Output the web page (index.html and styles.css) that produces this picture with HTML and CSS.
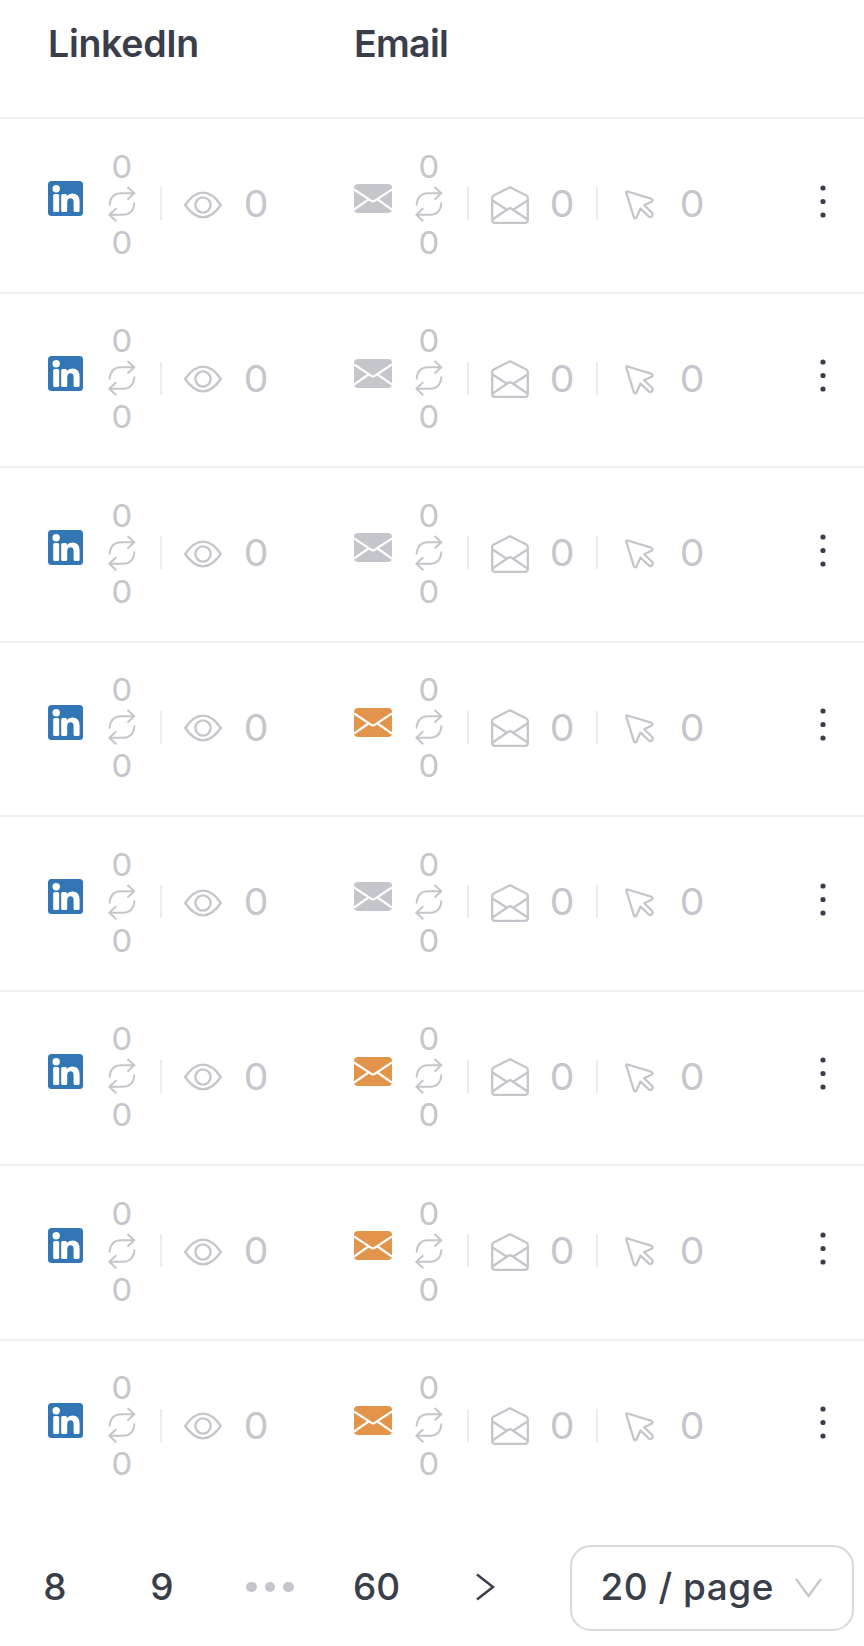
FILE: index.html
```html
<!DOCTYPE html>
<html lang="en">
<head>
<meta charset="utf-8">
<title>Campaign stats</title>
<link rel="stylesheet" href="styles.css">
</head>
<body>
<svg class="sprite" aria-hidden="true">
  <symbol id="linkedin" viewBox="0 0 35 35">
    <rect width="35" height="35" rx="3.5" fill="#3276b5"/>
    <g fill="#fff"><circle cx="8.200" cy="7.800" r="3.700"/><rect x="5.200" y="12.900" width="6" height="18" rx="1.500"/>
    <path d="M13.200 14.400q0-1.500 1.500-1.500h2.700q1.400 0 1.400 1.400v.6q2-2.500 5.400-2.500 7.400 0 7.400 8.200v8.800q0 1.500-1.500 1.500h-3q-1.500 0-1.500-1.500v-8.200q0-4-3-4-3.400 0-3.400 4.300v7.900q0 1.500-1.500 1.500h-3q-1.500 0-1.500-1.500z"/></g>
  </symbol>
  <symbol id="sync" viewBox="0 0 28 36">
    <path d="M1.700 19.500V18Q3 7.200 13 7.200H26.300M19.500 1 26.300 7.200 19.500 13.400M26.300 16.500V18Q25 28.800 15 28.800H1.500M8.300 22.300 1.300 28.800 8.300 35.300"/>
  </symbol>
  <symbol id="eye" viewBox="0 0 38 28">
    <path d="M1.200 14C6 7 12 1.700 19 1.700S32 7 36.800 14C32 21 26 26.300 19 26.300S6 21 1.200 14Z"/><circle cx="19" cy="14" r="7.600"/>
  </symbol>
  <symbol id="mail" viewBox="0 0 38 29">
    <rect width="38" height="29" rx="4" fill="currentColor"/>
    <path d="M0 5.500 17 16.600Q19 18.200 21 16.600L38 5.500M0 25.500 14.500 15.500M38 25.500 23.500 15.500" stroke="#fff" stroke-width="2.200"/>
  </symbol>
  <symbol id="open" viewBox="0 0 38 38">
    <path d="M1.200 12Q1.200 10.300 2.700 9.500L19 1.200 35.300 9.500Q36.800 10.300 36.800 12V34Q36.800 36.800 34 36.800H4Q1.200 36.800 1.200 34ZM1.500 14.500 16.300 24M36.500 14.500 21.700 24M1.500 33.500 17 23Q19 21.500 21 23L36.500 33.500"/>
  </symbol>
  <symbol id="cursor" viewBox="0 0 29 30">
    <path d="M2.500 1.500 26 8.700Q29 10 26.500 11.700L19.200 15.200 27 22.800Q28.300 24.300 27.100 26 25.700 27.900 24 26.600L15.500 18.500 11.500 27.500Q10 29.500 8.800 27L1.300 2.700Q1 1.200 2.500 1.500Z"/>
  </symbol>
  <symbol id="more" viewBox="0 0 6 33">
    <g fill="#393e4a"><circle cx="3" cy="3" r="2.600"/><circle cx="3" cy="16.500" r="2.600"/><circle cx="3" cy="30" r="2.600"/></g>
  </symbol>
</svg>
<div class="head"><div class="head-li">LinkedIn</div><div class="head-em">Email</div></div>
<div id="rows"></div>
<div class="pager">
  <span class="page p8">8</span><span class="page p9">9</span>
  <span class="ellipsis"><i></i><i></i><i></i></span>
  <span class="page p60">60</span>
  <svg class="next" viewBox="0 0 19 28"><path d="M1 1.500 17 14 1 26.500"/></svg>
  <div class="select"><span class="size">20 / page</span><svg class="caret" viewBox="0 0 27 20"><path d="M1 1 13.500 18 26 1"/></svg></div>
</div>
<script src="rows.js"></script>
</body>
</html>
```
FILE: styles.css
```css
body { margin: 0; background: #fff; font-family: Inter, "Liberation Sans", sans-serif; color: #393e4a; overflow: hidden; }
.sprite { position: absolute; width: 0; height: 0; }
svg { display: block; flex: none; fill: none; }
.head { display: flex; box-sizing: border-box; height: 119px; border-bottom: 2px solid #f0f0f0; padding-left: 48px; font-size: 37.5px; line-height: 88px; font-weight: 600; }
.head-li { width: 306px; letter-spacing: -0.3px; }
.head-em { letter-spacing: -0.7px; }
.row { display: flex; align-items: center; box-sizing: border-box; height: 174.5px; padding: 0 0 3px 48px; border-bottom: 2px solid #f0f0f0; color: #c5c6cb; stroke: #c5c6cb; stroke-width: 2.3; stroke-linejoin: round; }
.row:last-child { border-bottom-color: transparent; }
.row span { stroke: none; }
.cell { display: flex; align-items: center; }
.cell-li { width: 306px; }
.cell-em { width: 466px; }
.linkedin { width: 35px; height: 35px; margin: 0 25px 10px 0; stroke: none; }
.mail { width: 38px; height: 29px; margin: 0 23px 10px 0; stroke: none; color: #c5c6cb; }
.mail.on { color: #e2954a; }
.stack { display: flex; flex-direction: column; align-items: center; width: 28px; }
.stack span { font-size: 31px; line-height: 40px; padding-top: 1px; margin-bottom: -1px; }
.sync { width: 28px; height: 36px; stroke-width: 2; }
.bar { width: 2px; height: 33px; background: #ececec; margin-left: 24px; }
.eye { width: 38px; height: 28px; margin: 2px 21px 0 22px; }
.open { width: 38px; height: 38px; margin: 2px 20px 0 22px; }
.cursor { width: 29px; height: 30px; margin: 3px 25px 0 27px; }
.num { width: 26px; text-align: center; font-size: 37px; line-height: 40px; padding-top: 1px; }
.bar.second { margin-left: 21px; }
.more { width: 6px; height: 33px; margin-bottom: 5px; stroke: none; }
.stack span, .num { transform: scaleX(1.06); }
.pager { display: flex; align-items: center; height: 86px; margin-top: 30px; font-size: 37px; line-height: 44px; font-weight: 450; }
.page, .size { padding-bottom: 2px; }
.page { text-align: center; }
.p8 { width: 28px; margin-left: 41px; }
.p9 { width: 28px; margin-left: 79px; }
.p60 { width: 50px; margin-left: 58px; }
.ellipsis { display: flex; gap: 8px; margin: 0 0 2px 70px; }
.ellipsis i { width: 10.500px; height: 10.500px; border-radius: 50%; background: #c5c6cb; }
.next { width: 19px; height: 28px; margin: 0 0 2px 74px; stroke: #393e4a; stroke-width: 2.500; }
.select { display: flex; align-items: center; box-sizing: border-box; width: 284px; height: 86px; margin-left: 75px; padding-left: 29px; border: 2px solid #d9d9d9; border-radius: 21px; }
.size { width: 173px; white-space: nowrap; letter-spacing: 0.500px; }
.caret { width: 27px; height: 20px; margin: 0 0 0 21px; stroke: #c5c6cb; stroke-width: 2.200; }
```
FILE: rows.js
```js
const icon = (id, extra = "") => `<svg class="${id} ${extra}"><use href="#${id}"/></svg>`;
const stack = `<div class="stack"><span>0</span>${icon("sync")}<span>0</span></div>`;
const emailOn = [false, false, false, true, false, true, true, true];

document.getElementById("rows").innerHTML = emailOn.map(on => `
<div class="row">
  <div class="cell cell-li">${icon("linkedin")}${stack}<div class="bar"></div>${icon("eye")}<span class="num">0</span></div>
  <div class="cell cell-em">${icon("mail", on ? "on" : "")}${stack}<div class="bar"></div>${icon("open")}<span class="num">0</span>
  <div class="bar second"></div>${icon("cursor")}<span class="num">0</span></div>
  ${icon("more")}
</div>`).join("");
```
